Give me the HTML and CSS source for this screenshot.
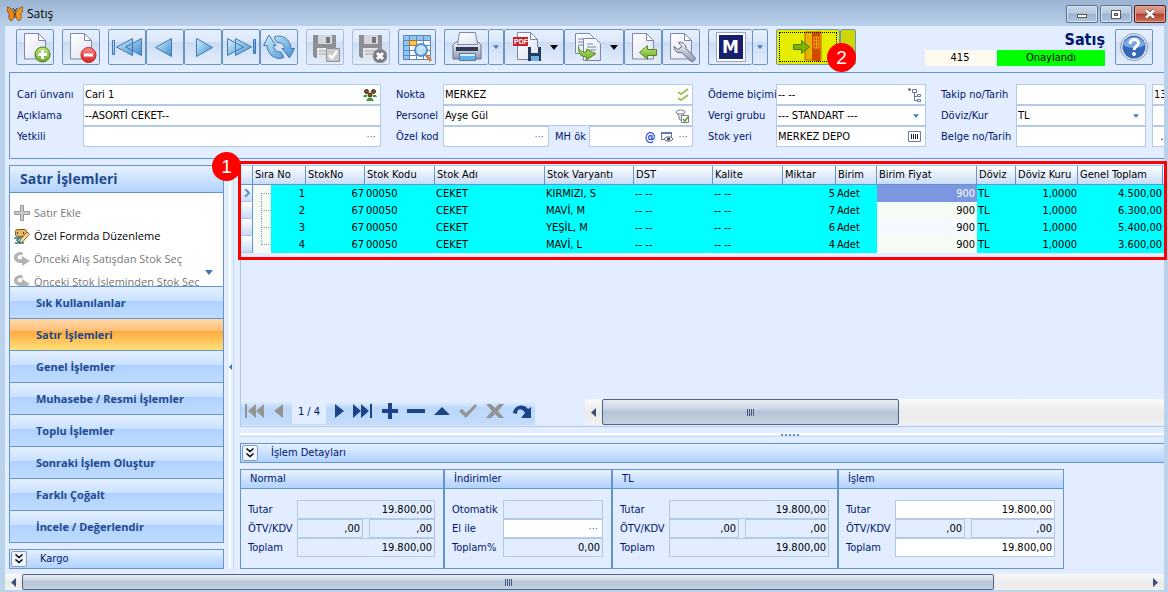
FILE: index.html
```
<!DOCTYPE html>
<html lang="tr">
<head>
    <meta charset="UTF-8">
    <meta name="viewport" content="width=device-width, initial-scale=1.0">
    <title>Satış</title>
    <link rel="stylesheet" href="styles.css">
</head>
<body>

<!-- shared icon parts -->
<svg class="defs" width="0" height="0" aria-hidden="true">
    <defs>
        <linearGradient id="blue" x1="0" y1="0" x2="1" y2="1">
            <stop offset="0" stop-color="#d8f0fc"/>
            <stop offset="1" stop-color="#3d8fd0"/>
        </linearGradient>
        <linearGradient id="green" x1="0" y1="0" x2="0" y2="1">
            <stop offset="0" stop-color="#c4e67a"/>
            <stop offset="1" stop-color="#6aa82a"/>
        </linearGradient>
        <linearGradient id="paper" x1="0" y1="0" x2="1" y2="1">
            <stop offset="0" stop-color="#ffffff"/>
            <stop offset="1" stop-color="#dfe3f0"/>
        </linearGradient>
        <linearGradient id="metal" x1="0" y1="0" x2="0" y2="1">
            <stop offset="0" stop-color="#f4f6fa"/>
            <stop offset="1" stop-color="#8d9ab5"/>
        </linearGradient>
        <linearGradient id="red" x1="0" y1="0" x2="0" y2="1">
            <stop offset="0" stop-color="#ff8a8a"/>
            <stop offset="1" stop-color="#d82020"/>
        </linearGradient>
    </defs>
    <symbol id="page" viewBox="0 0 32 32">
        <path d="M5.500 2.500h14l7 7v18.500h-21z" fill="url(#paper)" stroke="#7c88ab"/>
        <path d="M19.500 2.500v7h7z" fill="#fff" stroke="#7c88ab"/>
    </symbol>
    <symbol id="floppy" viewBox="0 0 32 32">
        <path d="M4 4h23v23H6l-2-2z" fill="#8c8f94"/>
        <path d="M9 4h14v9H9z" fill="#d4d6d9"/>
        <path d="M17 6h4v6h-4z" fill="#74777c"/>
        <path d="M8 17h15v10H8z" fill="#e4e5e7"/>
        <path d="M10 20h11M10 23h11" stroke="#a3a5a9"/>
    </symbol>
    <symbol id="down" viewBox="0 0 8 5"><path d="M0 0h8L4 5z" fill="currentColor"/></symbol>
    <symbol id="chevrons" viewBox="0 0 14 14">
        <path d="M3.500 2.500L7 5.500l3.500-3M3.500 7.500L7 10.500l3.500-3" fill="none" stroke="#000" stroke-width="1.500"/>
    </symbol>
    <symbol id="turn" viewBox="0 0 16 16">
        <path d="M8 1C3 1 0 3 0 6.500S3 12 8 12v3l8-5-8-5v3C5 8.500 3.500 8 3.500 6.200S5 4 9 4z" fill="#b3b3b3"/>
    </symbol>
</svg>

<div class="window">
    <header class="titlebar">
        <svg class="app-icon" width="16" height="16" viewBox="0 0 16 16">
            <path d="M7.500 8C6 3 2 1 0 1c0 4 1 6 2.500 7C1 9.500 2 14 4 15c2-1 3-4 3.500-7z" fill="#e8861a" stroke="#7a4210" stroke-width=".8"/>
            <path d="M8.500 8C10 3 14 1 16 1c0 4-1 6-2.500 7C15 9.500 14 14 12 15c-2-1-3-4-3.500-7z" fill="#f09a25" stroke="#7a4210" stroke-width=".8"/>
            <path d="M8 5v7M8 5L6 2M8 5l2-3" stroke="#4a2a10"/>
        </svg>
        <span class="title">Satış</span>
        <div class="window-buttons">
            <button aria-label="Simge durumuna küçült"><svg width="12" height="12"><rect x="1.500" y="6.500" width="9" height="3" fill="#fff" stroke="#555"/></svg></button>
            <button aria-label="Ekranı kapla"><svg width="12" height="12"><rect x="1.500" y="2.500" width="9" height="8" fill="#fff" stroke="#555"/><rect x="4.500" y="5.500" width="3" height="2" fill="#9bb4d0" stroke="#555"/></svg></button>
            <button class="close" aria-label="Kapat"><svg width="12" height="12"><path d="M2 2.500l8 7M10 2.500l-8 7" stroke="#555" stroke-width="4"/><path d="M2 2.500l8 7M10 2.500l-8 7" stroke="#fff" stroke-width="2.400"/></svg></button>
        </div>
    </header>

    <div class="client">
        <div class="toolbar">
            <div class="tool-group">
                <button class="tool" aria-label="Yeni"><svg width="32" height="32"><use href="#page"/><circle cx="23.500" cy="23.500" r="7.500" fill="url(#green)" stroke="#4c7a1c"/><path d="M23.500 19v9M19 23.500h9" stroke="#fff" stroke-width="3"/></svg></button>
            </div>
            <div class="tool-group">
                <button class="tool" aria-label="Sil"><svg width="32" height="32"><use href="#page"/><circle cx="23.500" cy="24" r="7.500" fill="url(#red)" stroke="#c02020"/><path d="M19 24h9" stroke="#fff" stroke-width="3"/></svg></button>
            </div>
            <div class="tool-group">
                <button class="tool" aria-label="İlk"><svg width="32" height="32" fill="url(#blue)" stroke="#3f78b5"><path d="M1.500 9.500h2v14h-2zM21.500 7.500v17L5.500 16zM30.500 7.500v17L14.500 16z"/></svg></button>
                <button class="tool" aria-label="Önceki"><svg width="32" height="32" fill="url(#blue)" stroke="#3f78b5"><path d="M22.500 7.500v18L6.500 16.500z"/></svg></button>
                <button class="tool" aria-label="Sonraki"><svg width="32" height="32" fill="url(#blue)" stroke="#3f78b5"><path d="M9.500 7.500v18l16-9z"/></svg></button>
                <button class="tool" aria-label="Son"><svg width="32" height="32" fill="url(#blue)" stroke="#3f78b5"><path d="M28.500 8.500h2v14h-2zM10.500 7.500v17l16-8.500zM2.500 7.500v17L18.500 16z"/></svg></button>
                <button class="tool" aria-label="Yenile"><svg width="32" height="32" fill="url(#blue)" stroke="#3f78b5"><path d="M6 4L.5 14.500H4c.5 7 5 12.500 12 13 2 0 4-.5 5-1.500l-3-5c-5 0-7.500-3-7.500-6.500H13zM26.500 27l5-9.500H28c-.5-7-5-12-12-12.500-2 0-4 .5-5 1.500l3 5c5 0 7.500 2.500 7.500 6H19z"/></svg></button>
            </div>
            <div class="tool-group">
                <button class="tool disabled" aria-label="Kaydet"><svg width="32" height="32"><use href="#floppy"/><path d="M17.500 17.500h13v13h-13z" fill="#c8cace" stroke="#8e9196"/><path d="M20 24l3 3 5-7" fill="none" stroke="#fff" stroke-width="2.500"/></svg></button>
            </div>
            <div class="tool-group">
                <button class="tool disabled" aria-label="Vazgeç"><svg width="32" height="32"><use href="#floppy"/><circle cx="25" cy="25" r="7" fill="#777b81" stroke="#999"/><path d="M22 22l6 6M28 22l-6 6" stroke="#fff" stroke-width="3"/></svg></button>
            </div>
            <div class="tool-group">
                <button class="tool" aria-label="Listede ara"><svg width="32" height="32"><path d="M2 4h28v25H2z" fill="#fff"/><path d="M2 4h28v5H2zM2 9h6v20H2z" fill="#8fc5f2"/><path d="M2.500 4.500h27v24h-27zM2 9.500h27M2 14.500h27M2 19.500h27M2 24.500h27M8.500 4v24M15.500 4v24M22.500 4v24" fill="none" stroke="#5b87b8"/><path d="M8.500 9.500h7v5h-7z" fill="#fbc55a" stroke="#b5731c"/><circle cx="20" cy="19" r="6" fill="#bfe3fa" fill-opacity=".9" stroke="#5a8fd0" stroke-width="2"/><path d="M25 24l5 6" stroke="#c98a50" stroke-width="3"/></svg></button>
            </div>
            <div class="tool-group">
                <button class="tool print" aria-label="Yazdır"><svg width="34" height="32"><path d="M3 14l3-3h22l3 3v14H3z" fill="url(#metal)" stroke="#66718e"/><path d="M9.500 1.500h16l2 12h-20z" fill="url(#paper)" stroke="#7c88ab"/><path d="M6 16h22v4H6z" fill="#333b50"/><path d="M9.500 22.500h16v7h-16z" fill="#d6f0ff" stroke="#66718e"/><path d="M10 25h15v4H10z" fill="#5cb2ea"/></svg></button>
                <button class="drop" aria-label="Yazdırma seçenekleri"><svg width="6" height="4"><use href="#down"/></svg></button>
                <button class="tool pdf" aria-label="PDF kaydet"><svg width="32" height="32"><path d="M6.500 1.500h13l7 7v20h-20z" fill="url(#paper)" stroke="#7c88ab"/><path d="M19.500 1.500v7h7z" fill="#fff" stroke="#7c88ab"/><path d="M2 6h15v9H2z" fill="#c8222c"/><path d="M17 16h13v14H17z" fill="#243a5e"/><path d="M20 16h7v6h-7z" fill="#e8eef5"/><path d="M20 25h8v5h-8z" fill="#6fb0e0"/><text x="3" y="13" class="pdf-text">PDF</text></svg><svg width="8" height="5"><use href="#down"/></svg></button>
                <button class="tool pdf" aria-label="Kopyala"><svg width="32" height="32"><path d="M4.500 2.500h14l4 4v16h-18z" fill="url(#paper)" stroke="#7c88ab"/><path d="M7 8h6M7 11h6M7 14h6" stroke="#6f86ab"/><path d="M12.500 7.500h12l5 5v17h-17z" fill="url(#paper)" stroke="#7c88ab"/><path d="M16 13h6M16 16h9M16 19h9M16 22h9" stroke="#6f86ab"/><path d="M7.500 15c0 4 2 6 8 6v-3l9 5-9 6v-3c-7 0-8-5-8-11z" fill="url(#green)" stroke="#568a22"/></svg><svg width="8" height="5"><use href="#down"/></svg></button>
                <button class="tool" aria-label="Geri al"><svg width="32" height="32"><use href="#page"/><path d="M12.500 21.500l8-7v4h9v6h-9v4z" fill="url(#green)" stroke="#568a22"/></svg></button>
                <button class="tool" aria-label="Ayarlar"><svg width="32" height="32"><use href="#page"/><path d="M13.500 11.500c4-1 8 2 7.500 6l9 9c1 2-2 5-4 4l-9-9c-4 1-8-1-8-6l4 3 4-3z" fill="url(#metal)" stroke="#5d667e"/></svg></button>
            </div>
            <div class="tool-group">
                <button class="tool print" aria-label="M"><span class="m-logo">M</span></button>
                <button class="drop" aria-label="M seçenekleri"><svg width="6" height="4"><use href="#down"/></svg></button>
            </div>
            <div class="tool-group exit-group">
                <button class="tool exit" aria-label="Çıkış"><svg width="32" height="32"><path d="M13 1h16v28H13z" fill="#e8b300" stroke="#c25a00"/><path d="M20 2l8-1v30l-8-2z" fill="#d14a00"/><path d="M22 6h5v11h-5zM22 9.500h5M22 13h5M24.500 6v11" fill="none" stroke="#f0a800"/><path d="M1.500 13.500h8v-4l8 6.500-8 6.500v-4h-8z" fill="#7eb400" stroke="#4c7a00"/></svg></button>
                <button class="drop" aria-label="Çıkış seçenekleri"></button>
                <span class="callout callout-two">2</span>
            </div>
            <div class="status">
                <strong>Satış</strong>
                <div class="status-row">
                    <span class="status-no">415</span>
                    <span class="status-ok">Onaylandı</span>
                </div>
            </div>
            <button class="tool help" aria-label="Yardım"><svg width="32" height="32"><circle cx="16" cy="16" r="13.500" fill="#e8edf7" stroke="#8a95b5"/><circle cx="16" cy="16" r="11.500" fill="#3468b8"/><path d="M5 14a11.500 11.500 0 0 1 22 0c-7 4-15 4-22 0z" fill="#7ca6e0"/><path d="M12 13c0-6 8.500-5.500 8.500-1 0 3.500-4.500 3-4.500 7" fill="none" stroke="#fff" stroke-width="3"/><circle cx="16" cy="23" r="2" fill="#fff"/></svg></button>
        </div>

        <form class="info">
            <div class="info-group customer">
                <label for="cari">Cari ünvanı</label>
                <div class="field"><input id="cari" value="Cari 1"><svg width="14" height="14"><g fill="#7c5020" stroke="#4a2d0c"><circle cx="3.500" cy="3.500" r="2"/><circle cx="10.500" cy="3.500" r="2"/><circle cx="7" cy="7" r="2"/></g><path d="M0 9h4v-2h-3zM10 9h4l-1-2h-3zM3 13h8l-2-3H5z" fill="#3c9a35"/></svg></div>
                <label for="aciklama">Açıklama</label>
                <div class="field"><input id="aciklama" value="--ASORTİ CEKET--"></div>
                <label for="yetkili">Yetkili</label>
                <div class="field"><input id="yetkili"><span class="dots">···</span></div>
            </div>
            <div class="info-group branch">
                <label for="nokta">Nokta</label>
                <div class="field"><input id="nokta" value="MERKEZ"><svg width="12" height="14" fill="none" stroke="#9cc45c" stroke-width="2"><path d="M1 4l3 2 7-5M1 10l3 2 7-5"/></svg></div>
                <label for="personel">Personel</label>
                <div class="field"><input id="personel" value="Ayşe Gül"><svg width="14" height="14"><path d="M1 3h9l-3 4v5l-3-2V7z" fill="#e5e8ed" stroke="#777f8e"/><ellipse cx="5.500" cy="3" rx="4.500" ry="2" fill="#fff" stroke="#777f8e"/><path d="M6.500 6.500h7v7h-7z" fill="#fff" stroke="#777f8e"/><path d="M8 10l2 2 3-4" fill="none" stroke="#5d9c1c" stroke-width="1.500"/></svg></div>
                <label for="ozel">Özel kod</label>
                <div class="split">
                    <div class="field"><input id="ozel"><span class="dots">···</span></div>
                    <label for="mh">MH ök</label>
                    <div class="field"><input id="mh"><span class="at">@</span><svg width="13" height="12"><path d="M.5 1.500h10v7H.5z" fill="#fff" stroke="#5d7ca8"/><path d="M0 1h11v2H0z" fill="#5d7ca8"/><path d="M3 8c2-3 7-3 9 0-2 3-7 3-9 0z" fill="#fff" stroke="#66707e"/><circle cx="7.500" cy="8" r="1.800" fill="#4c586c"/></svg><span class="dots">···</span></div>
                </div>
            </div>
            <div class="info-group payment">
                <label for="odeme">Ödeme biçimi</label>
                <div class="field"><input id="odeme" value="-- --"><svg width="14" height="14" fill="none" stroke="#66779a"><path d="M0 1h3L1.500 3z" fill="#333"/><path d="M6.500 5v7.500H9M6.500 8.500H9"/><path d="M4.500 1.500h4v3h-4zM9.500 6.500h3v2h-3zM9.500 11.500h3v2h-3z" fill="#fff"/></svg></div>
                <label for="vergi">Vergi grubu</label>
                <div class="field"><select id="vergi"><option>--- STANDART ---</option></select><svg class="arrow" width="6" height="4"><use href="#down"/></svg></div>
                <label for="stokyeri">Stok yeri</label>
                <div class="field"><input id="stokyeri" value="MERKEZ DEPO"><svg width="14" height="12"><path d="M.5.5h12v10H.5z" fill="#fff" stroke="#6a7ba0"/><path d="M3.500 3v5M5.500 3v5M7.500 3v5M9.500 3v5" stroke="#222"/></svg></div>
            </div>
            <div class="info-group document">
                <label for="takip">Takip no/Tarih</label>
                <div class="field"><input id="takip"></div>
                <label for="doviz">Döviz/Kur</label>
                <div class="field"><select id="doviz"><option>TL</option></select><svg class="arrow" width="6" height="4"><use href="#down"/></svg></div>
                <label for="belge">Belge no/Tarih</label>
                <div class="field"><input id="belge"></div>
            </div>
            <div class="dates">
                <div class="field"><input value="13.01.2023" aria-label="Takip tarihi"></div>
                <div class="field"><input aria-label="Kur"></div>
                <div class="field"><input value="  .  ." aria-label="Belge tarihi"></div>
            </div>
        </form>

        <div class="main">
            <aside class="sidebar">
                <nav class="menu">
                    <h2>Satır İşlemleri</h2>
                    <ul class="actions">
                        <li><a href="#"><svg width="16" height="16"><path d="M6.500.5h3v6h6v3h-6v6h-3v-6h-6v-3h6z" fill="#c9c9c9" stroke="#999"/></svg>Satır Ekle</a></li>
                        <li><a href="#" class="enabled"><svg width="16" height="16"><rect x="1.500" y="1.500" width="11" height="7" rx="2" fill="#e8b866" stroke="#8a5c1e"/><path d="M4 4l-1 1 1 1M9 4l1 1-1 1" fill="none" stroke="#5b3a10"/><path d="M6 12l7-8 2.500 2-7 8-3 1z" fill="#f7dc9a" stroke="#8a5c1e"/><path d="M0 10h6l-3 2 3 3H1M7 15h3" fill="none" stroke="#277a88" stroke-width="1.500"/></svg>Özel Formda Düzenleme</a></li>
                        <li><a href="#"><svg width="16" height="16"><use href="#turn"/></svg>Önceki Alış Satışdan Stok Seç</a></li>
                        <li><a href="#"><svg width="16" height="16"><use href="#turn"/></svg>Önceki Stok İşleminden Stok Seç</a></li>
                    </ul>
                    <svg class="more" width="8" height="5"><use href="#down"/></svg>
                    <div class="sections">
                        <button>Sık Kullanılanlar</button>
                        <button class="active">Satır İşlemleri</button>
                        <button>Genel İşlemler</button>
                        <button>Muhasebe / Resmi İşlemler</button>
                        <button>Toplu İşlemler</button>
                        <button>Sonraki İşlem Oluştur</button>
                        <button>Farklı Çoğalt</button>
                        <button>İncele / Değerlendir</button>
                    </div>
                </nav>
                <div class="fold"><button aria-label="Kargo aç"><svg width="14" height="14"><use href="#chevrons"/></svg></button>Kargo</div>
            </aside>

            <div class="splitter"><svg width="4" height="6"><path d="M3 0v6L0 3z" fill="#3d74c4"/></svg></div>

            <section class="content">
                <div class="grid">
                    <div class="mark"><span class="callout callout-one">1</span></div>
                    <table>
                        <colgroup>
                            <col class="w-ind"><col class="w-tree"><col class="w-sira"><col class="w-no"><col class="w-kod"><col class="w-adi"><col class="w-var"><col class="w-dst"><col class="w-kal"><col class="w-mik"><col class="w-bir"><col class="w-fiy"><col class="w-dov"><col class="w-kur"><col class="w-top"><col>
                        </colgroup>
                        <thead>
                            <tr>
                                <th></th>
                                <th colspan="2">Sıra No</th>
                                <th>StokNo</th>
                                <th>Stok Kodu</th>
                                <th>Stok Adı</th>
                                <th>Stok Varyantı</th>
                                <th>DST</th>
                                <th>Kalite</th>
                                <th>Miktar</th>
                                <th>Birim</th>
                                <th>Birim Fiyat</th>
                                <th>Döviz</th>
                                <th>Döviz Kuru</th>
                                <th>Genel Toplam</th>
                                <th class="rest"></th>
                            </tr>
                        </thead>
                        <tbody>
                            <tr><td class="ind"><svg width="6" height="8"><path d="M1 0l4 4-4 4" fill="none" stroke="#5c8fd6" stroke-width="2"/></svg></td><td class="tree"></td><td class="num">1</td><td class="num">67</td><td>00050</td><td>CEKET</td><td>KIRMIZI, S</td><td>-- --</td><td>-- --</td><td class="num">5</td><td>Adet</td><td class="price selected">900</td><td>TL</td><td class="num">1,0000</td><td class="num">4.500,00</td><td></td></tr>
                            <tr><td class="ind"></td><td class="tree"></td><td class="num">2</td><td class="num">67</td><td>00050</td><td>CEKET</td><td>MAVİ, M</td><td>-- --</td><td>-- --</td><td class="num">7</td><td>Adet</td><td class="price">900</td><td>TL</td><td class="num">1,0000</td><td class="num">6.300,00</td><td></td></tr>
                            <tr><td class="ind"></td><td class="tree"></td><td class="num">3</td><td class="num">67</td><td>00050</td><td>CEKET</td><td>YEŞİL, M</td><td>-- --</td><td>-- --</td><td class="num">6</td><td>Adet</td><td class="price">900</td><td>TL</td><td class="num">1,0000</td><td class="num">5.400,00</td><td></td></tr>
                            <tr><td class="ind"></td><td class="tree"></td><td class="num">4</td><td class="num">67</td><td>00050</td><td>CEKET</td><td>MAVİ, L</td><td>-- --</td><td>-- --</td><td class="num">4</td><td>Adet</td><td class="price">900</td><td>TL</td><td class="num">1,0000</td><td class="num">3.600,00</td><td></td></tr>
                        </tbody>
                    </table>
                    <div class="grid-footer">
                        <div class="navigator">
                            <button class="off" aria-label="İlk kayıt"><svg width="20" height="14"><path d="M0 0h2v14H0zM11 0v14L3 7zM19 0v14l-8-7z"/></svg></button>
                            <button class="off" aria-label="Önceki kayıt"><svg width="9" height="14"><path d="M9 0v14L0 7z"/></svg></button>
                            <span class="position">1 / 4</span>
                            <button aria-label="Sonraki kayıt"><svg width="9" height="14"><path d="M0 0v14l9-7z"/></svg></button>
                            <button aria-label="Son kayıt"><svg width="20" height="14"><path d="M17 0h2v14h-2zM0 0v14l8-7zM8 0v14l8-7z"/></svg></button>
                            <button aria-label="Ekle"><svg width="16" height="16"><path d="M6 0h4v6h6v4h-6v6H6v-6H0V6h6z"/></svg></button>
                            <button aria-label="Sil"><svg width="18" height="4"><path d="M0 0h18v4H0z"/></svg></button>
                            <button aria-label="Düzenle"><svg width="16" height="8"><path d="M0 8h16L8 0z"/></svg></button>
                            <button class="off" aria-label="Onayla"><svg width="18" height="14"><path d="M0 7l3-2 4 4 9-9 2 2L7 14z"/></svg></button>
                            <button class="off" aria-label="Vazgeç"><svg width="18" height="14"><path d="M0 0h5l4 4 4-4h5l-6 7 6 7h-5l-4-4-4 4H0l6-7z"/></svg></button>
                            <button aria-label="Yenile"><svg width="18" height="13"><path d="M0 8C1 0 11-2 15 4l3-2v11H8l4-5C9 3 4 3 4 9z"/></svg></button>
                        </div>
                        <div class="scrollbar table-scroll">
                            <button class="step" aria-label="Sola kaydır"><svg width="5" height="9"><path d="M5 0v9L0 4.500z"/></svg></button>
                            <div class="thumb"><span></span></div>
                        </div>
                    </div>
                </div>

                <div class="h-splitter"><span></span></div>

                <div class="fold details-head"><button aria-label="İşlem detayları aç"><svg width="14" height="14"><use href="#chevrons"/></svg></button>İşlem Detayları</div>

                <div class="totals">
                    <fieldset class="total-box normal">
                        <legend>Normal</legend>
                        <div class="rows">
                            <label for="n1">Tutar</label><input id="n1" value="19.800,00" readonly>
                            <label for="n2">ÖTV/KDV</label><div class="pair"><input id="n2" value=",00" readonly><input value=",00" aria-label="KDV" readonly></div>
                            <label for="n3">Toplam</label><input id="n3" value="19.800,00" readonly>
                        </div>
                    </fieldset>
                    <fieldset class="total-box discounts">
                        <legend>İndirimler</legend>
                        <div class="rows">
                            <label for="d1">Otomatik</label><input id="d1" readonly>
                            <label for="d2">El ile</label><div class="field"><input id="d2"><span class="dots">···</span></div>
                            <label for="d3">Toplam%</label><input id="d3" value="0,00" readonly>
                        </div>
                    </fieldset>
                    <fieldset class="total-box">
                        <legend>TL</legend>
                        <div class="rows">
                            <label for="t1">Tutar</label><input id="t1" value="19.800,00" readonly>
                            <label for="t2">ÖTV/KDV</label><div class="pair"><input id="t2" value=",00" readonly><input value=",00" aria-label="KDV" readonly></div>
                            <label for="t3">Toplam</label><input id="t3" value="19.800,00" readonly>
                        </div>
                    </fieldset>
                    <fieldset class="total-box">
                        <legend>İşlem</legend>
                        <div class="rows">
                            <label for="i1">Tutar</label><input id="i1" value="19.800,00">
                            <label for="i2">ÖTV/KDV</label><div class="pair"><input id="i2" value=",00" readonly><input value=",00" aria-label="KDV" readonly></div>
                            <label for="i3">Toplam</label><input id="i3" value="19.800,00">
                        </div>
                    </fieldset>
                </div>
            </section>
        </div>

        <div class="scrollbar page-scroll">
            <button class="step" aria-label="Sola kaydır"><svg width="5" height="9"><path d="M5 0v9L0 4.500z"/></svg></button>
            <div class="thumb"><span></span></div>
            <button class="step" aria-label="Sağa kaydır"><svg width="5" height="9"><path d="M0 0v9l5-4.500z"/></svg></button>
        </div>
    </div>
</div>

</body>
</html>
```

FILE: styles.css
```
* {
    box-sizing: border-box;
}
body {
    margin: 0;
    font-family: Tahoma, "DejaVu Sans Condensed", "Noto Sans", sans-serif;
    font-size: 11px;
    line-height: 16px;
    color: #00156e;
}
button, input, select {
    font: inherit;
    color: inherit;
    margin: 0;
    padding: 0;
    border: 0;
    background: none;
    border-radius: 0;
}
svg {
    display: block;
    flex-shrink: 0;
}
.defs {
    position: absolute;
}
.window {
    display: flex;
    flex-direction: column;
    min-height: 100vh;
    overflow: hidden;
    background: linear-gradient(#9bb4d2, #b8d0ea 26px, #bcd3ec);
    padding: 0 4px 2px 5px;
}

/* title bar */
.titlebar {
    display: flex;
    align-items: center;
    height: 26px;
    padding: 2px 0 0 2px;
    color: #000;
}
.title {
    margin-left: 4px;
    font-size: 12px;
    font-family: "Segoe UI", "Open Sans", sans-serif;
}
.window-buttons {
    display: flex;
    gap: 2px;
    margin-left: auto;
    margin-right: -2px;
}
.window-buttons button {
    width: 32px;
    height: 18px;
    display: flex;
    align-items: center;
    justify-content: center;
    border: 1px solid #5b7393;
    border-radius: 2px;
    background: linear-gradient(#c8d8ea, #b8cade 45%, #98b2cf 50%, #b0c8e2);
    box-shadow: inset 0 0 0 1px #d6e4f2;
}
.window-buttons .close {
    border-color: #5a2020;
    background: linear-gradient(#e0a090, #d08070 45%, #b8402c 50%, #cc7058);
    box-shadow: inset 0 0 0 1px #e0a898;
}

.client {
    flex: 1;
    display: flex;
    flex-direction: column;
    background: #e2eeff;
}

/* toolbar */
.toolbar {
    display: flex;
    height: 46px;
    padding: 3px 11px 0;
}
.tool-group {
    display: flex;
    margin-right: 8px;
    flex-shrink: 0;
}
.tool, .drop {
    height: 36px;
    display: flex;
    align-items: center;
    justify-content: center;
    border: 1px solid #6b93c6;
    border-radius: 2px;
    background: linear-gradient(#e6f0fd, #dce9fa 35%, #cbdcf3 36%, #e3eefc);
}
.tool {
    width: 38px;
}
.tool.disabled {
    border-color: #a9bfdc;
}
.tool.print {
    width: 44px;
    border-right: 0;
}
.drop {
    width: 16px;
    color: #4a7ab8;
}
.tool.pdf {
    width: 60px;
    gap: 7px;
    color: #000;
}
.pdf-text {
    font: bold 7px "Liberation Sans", sans-serif;
    fill: #fff;
}
.m-logo {
    width: 28px;
    height: 28px;
    border: 2px solid #fff;
    outline: 1px solid #9ba6c0;
    background: #17206c;
    color: #fff;
    font: bold 17px/24px "DejaVu Sans", sans-serif;
}
.exit-group {
    position: relative;
}
.tool.exit {
    width: 64px;
    background: #e6ee00;
    outline: 1px dotted #000;
    outline-offset: -4px;
}
.exit-group .drop {
    background: #ccd600;
}
.callout {
    position: absolute;
    width: 29px;
    height: 29px;
    border-radius: 50%;
    background: #f00;
    color: #fff;
    font: 19px/29px "Liberation Sans", sans-serif;
    text-align: center;
}
.callout-two {
    left: 51px;
    top: 14px;
}
.status {
    margin-left: auto;
    margin-right: 10px;
    text-align: right;
}
.status strong {
    display: block;
    height: 21px;
    font-size: 16px;
    line-height: 22px;
}
.status-row {
    display: flex;
    gap: 2px;
    color: #000;
    text-align: center;
}
.status-no {
    width: 70px;
    background: #fffaf0;
}
.status-ok {
    width: 108px;
    background: #0f0;
}

/* document fields */
.info {
    display: flex;
    margin-left: 4px;
    height: 87px;
    padding: 11px 0 0 7px;
    border: 1px solid #6593cf;
    border-right: 0;
    overflow: hidden;
}
.info-group {
    display: grid;
    grid-auto-rows: 21px;
    align-items: center;
    margin-right: 15px;
    flex-shrink: 0;
}
.customer {
    grid-template-columns: 66px 298px;
}
.branch {
    grid-template-columns: 47px 250px;
}
.payment {
    grid-template-columns: 68px 150px;
}
.document {
    grid-template-columns: 75px 130px;
    margin-right: 6px;
}
.info label, .rows label {
    white-space: nowrap;
}
.field {
    display: flex;
    align-items: center;
    height: 21px;
    padding-right: 3px;
    gap: 5px;
    border: 1px solid #b4c9e6;
    background: #fff;
}
.field input, .field select {
    flex: 1;
    min-width: 0;
    height: 18px;
    padding-left: 1px;
    color: #000;
    background: transparent;
    appearance: none;
    outline: 0;
}
.field .arrow {
    margin-right: 3px;
    color: #4a80c8;
}
.split {
    display: flex;
    align-items: center;
}
.split .field:first-child {
    width: 106px;
}
.split .field:last-child {
    width: 104px;
}
.split label {
    width: 40px;
    padding-left: 6px;
}
.dots {
    color: #4070b0;
    margin-right: 1px;
}
.at {
    color: #1c45d8;
    font-size: 12px;
    font-weight: bold;
}
.dates {
    flex: 0 0 90px;
}

/* body */
.main {
    flex: 1;
    display: flex;
    margin: 6px 0 5px 4px;
}
.sidebar {
    width: 215px;
    display: flex;
    flex-direction: column;
    gap: 6px;
    font-family: "Segoe UI", "Open Sans", sans-serif;
}
.menu {
    position: relative;
    flex: 1;
    display: flex;
    flex-direction: column;
    border: 1px solid #6593cf;
    background: #fff;
}
.menu h2 {
    margin: 0;
    height: 27px;
    padding-left: 10px;
    border-bottom: 1px solid #6593cf;
    background: linear-gradient(#e6f1ff, #b4d3fc);
    color: #1e4a8c;
    font-size: 14px;
    line-height: 26px;
}
.actions {
    flex: 1 0 93px;
    height: 93px;
    margin: 0;
    padding: 8px 4px 0;
    list-style: none;
    overflow: hidden;
}
.actions a {
    display: flex;
    align-items: center;
    gap: 4px;
    height: 23px;
    color: #777;
    text-decoration: none;
    white-space: nowrap;
}
.actions .enabled {
    color: #000;
}
.more {
    position: absolute;
    top: 104px;
    right: 10px;
    color: #3d74c4;
}
.sections button {
    display: block;
    width: 100%;
    height: 32px;
    padding-left: 26px;
    border-top: 1px solid #6593cf;
    background: linear-gradient(#e4f0ff, #cbe1ff 45%, #aed2ff 46%, #c0dcff);
    color: #1e4a8c;
    font-weight: bold;
    text-align: left;
}
.sections .active {
    background: linear-gradient(#ffd9a8, #ffbf78 38%, #ffaa3c 40%, #ffe07a);
}
.fold {
    display: flex;
    align-items: center;
    gap: 13px;
    height: 20px;
    padding-left: 1px;
    border: 1px solid #6593cf;
    background: linear-gradient(#e4f0ff, #b0d2ff);
    font-family: Tahoma, "DejaVu Sans Condensed", "Noto Sans", sans-serif;
}
.fold button {
    width: 16px;
    height: 16px;
    border: 1px solid #8a9cb8;
    border-radius: 2px;
    background: #eef4fc;
}
.splitter {
    width: 5px;
    margin: 0 6px 0 5px;
    display: flex;
    align-items: center;
    border-left: 2px solid #fff;
    border-right: 1px solid #c5dcfa;
}
.splitter svg {
    margin-left: -2px;
}
.content {
    flex: 1;
    min-width: 0;
    display: flex;
    flex-direction: column;
}

/* stock lines */
.grid {
    position: relative;
    flex: 1;
    display: flex;
    flex-direction: column;
    border: 1px solid #b4c9e6;
    border-right: 0;
}
.mark {
    position: absolute;
    top: -5px;
    left: -3px;
    right: -3px;
    height: 99px;
    border: 3px solid #f00;
}
.callout-one {
    top: -12px;
    left: -29px;
}
table {
    width: 100%;
    min-width: 922px;
    table-layout: fixed;
    border-collapse: separate;
    border-spacing: 0;
    color: #000;
}
.w-ind { width: 12px; }
.w-tree { width: 18px; }
.w-sira { width: 35px; }
.w-no { width: 59px; }
.w-kod { width: 70px; }
.w-adi { width: 110px; }
.w-var { width: 89px; }
.w-dst { width: 79px; }
.w-kal { width: 70px; }
.w-mik { width: 53px; }
.w-bir { width: 41px; }
.w-fiy { width: 100px; }
.w-dov { width: 39px; }
.w-kur { width: 62px; }
.w-top { width: 85px; }
th {
    height: 19px;
    padding: 0 2px;
    border-right: 1px solid #6593cf;
    border-bottom: 1px solid #6593cf;
    background: linear-gradient(#fff, #c8dcf8);
    font-weight: normal;
    text-align: left;
    white-space: nowrap;
}
th.rest {
    padding: 0;
    border-right: 0;
}
td {
    height: 17px;
    padding: 0 1px;
    background: #0ff;
    line-height: 17px;
    white-space: nowrap;
}
td:last-child {
    padding: 0;
}
td.num {
    text-align: right;
}
td.ind {
    padding-left: 3px;
    border-right: 1px solid #6593cf;
    border-bottom: 1px solid #a8c4ec;
    background: linear-gradient(#fff, #c8dcf8);
}
td.tree {
    position: relative;
    background: #f5fbf3;
}
td.tree::before {
    content: "";
    position: absolute;
    top: 8px;
    left: 8px;
    right: 0;
    border-top: 1px dotted #8a9cc0;
}
td.tree::after {
    content: "";
    position: absolute;
    top: 0;
    bottom: 0;
    left: 8px;
    border-left: 1px dotted #8a9cc0;
}
tr:first-child .tree::after {
    top: 8px;
}
tr:last-child .tree::after {
    bottom: 8px;
}
td.price {
    background: #f4fcf3;
    text-align: right;
    padding-right: 2px;
}
tr:nth-child(3) .price {
    background: #f5faff;
}
tr .price.selected {
    background: #7b97e0;
    color: #fff;
}
.grid-footer {
    display: flex;
    justify-content: space-between;
    align-items: center;
    margin-top: auto;
    height: 28px;
}
.navigator {
    display: flex;
    align-items: center;
    height: 26px;
    padding: 0 4px 2px;
    gap: 9px;
    background: linear-gradient(#e2eeff 10%, #bcd8fb 35%, #c4dcfc);
}
.navigator svg {
    fill: #1b4489;
}
.navigator .off svg {
    fill: #949494;
}
.position {
    width: 34px;
    height: 26px;
    background: #e2eeff;
    line-height: 28px;
    text-align: center;
}
.scrollbar {
    display: flex;
    background: linear-gradient(#fafafa, #ebebeb 50%, #f0f0f0);
}
.scrollbar .step {
    display: flex;
    align-items: center;
    justify-content: center;
    width: 17px;
}
.scrollbar svg {
    fill: #3f4f74;
}
.thumb {
    display: flex;
    align-items: center;
    justify-content: center;
    border: 1px solid #4f6288;
    border-radius: 2px;
    background: linear-gradient(#e8ecf1, #cdd7e3 35%, #b4c4d8 50%, #c5d1e0);
}
.thumb span {
    width: 7px;
    height: 7px;
    background: repeating-linear-gradient(90deg, #45587c 0 1px, transparent 1px 2px);
}
.table-scroll {
    width: 579px;
    height: 26px;
}
.table-scroll .thumb {
    width: 297px;
}
.h-splitter {
    height: 4px;
    margin: 6px 0;
    border-top: 2px solid #fff;
    border-bottom: 1px solid #c5dcfa;
}
.h-splitter span {
    display: block;
    width: 19px;
    height: 2px;
    margin: -1px 0 0 541px;
    background: repeating-linear-gradient(90deg, #5c8fd6 0 2px, transparent 2px 4px);
}
.details-head {
    border-right: 0;
    margin-bottom: 6px;
}

/* totals */
.totals {
    display: flex;
}
.total-box {
    width: 226px;
    min-width: 0;
    margin: 0;
    padding: 0;
    border: 1px solid #6593cf;
}
.total-box.normal {
    width: 204px;
}
.total-box.discounts {
    width: 168px;
}
.total-box legend {
    float: left;
    width: 100%;
    height: 19px;
    padding: 0 9px;
    border-bottom: 1px solid #6593cf;
    background: linear-gradient(#eaf3ff, #b0d2ff);
    line-height: 18px;
}
.rows {
    clear: both;
    display: grid;
    grid-template-columns: 49px minmax(0, 1fr);
    grid-auto-rows: 19px;
    align-items: center;
    padding: 11px 8px 11px 7px;
}
.discounts .rows {
    grid-template-columns: 51px minmax(0, 1fr);
}
.rows input {
    width: 100%;
    min-width: 0;
    height: 19px;
    padding-right: 2px;
    border: 1px solid #b4c9e6;
    background: #fff;
    color: #000;
    text-align: right;
}
.rows input:read-only {
    background: #e2eeff;
}
.rows .field {
    height: 19px;
}
.rows .field input {
    border: 0;
    height: 16px;
}
.pair {
    display: flex;
    gap: 6px;
}
.pair input:first-child {
    flex: 0 0 70px;
}
.normal .pair input:first-child {
    flex-basis: 66px;
}
.page-scroll {
    height: 16px;
}
.page-scroll .thumb {
    flex: 0 1 972px;
}
.page-scroll .step:last-child {
    margin-left: auto;
}
```
